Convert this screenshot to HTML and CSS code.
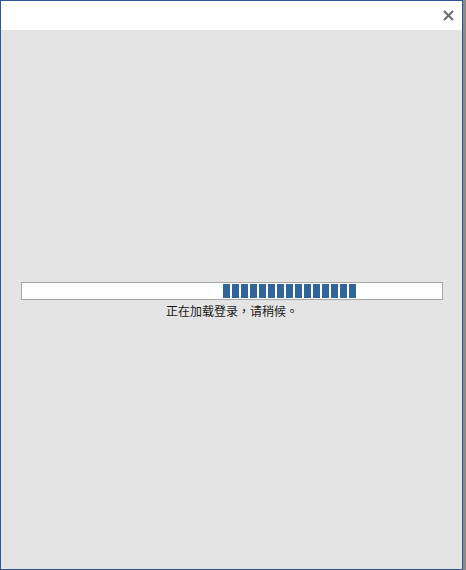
FILE: index.html
```html
<!DOCTYPE html>
<html lang="zh-CN">
<head>
<meta charset="utf-8">
<title>登录</title>
<link rel="stylesheet" href="styles.css">
</head>
<body>
<div class="frame">
  <div class="window">
    <div class="titlebar">
      <span class="close" aria-label="关闭">
        <svg width="11" height="11" viewBox="0 0 11 11"><path d="M1 1 L10 10 M10 1 L1 10" stroke="#6b6b6b" stroke-width="2" fill="none"/></svg>
      </span>
    </div>
    <div class="content">
      <div class="progress">
        <div class="blocks">
          <span></span><span></span><span></span><span></span><span></span>
          <span></span><span></span><span></span><span></span><span></span>
          <span></span><span></span><span></span><span></span><span></span>
        </div>
      </div>
      <div class="status">正在加载登录<span class="punct" lang="zh-TW">，</span>请稍候<span class="punct" lang="zh-TW">。</span></div>
    </div>
  </div>
</div>
</body>
</html>
```
FILE: styles.css
```css
html, body {
  margin: 0;
  padding: 0;
  width: 466px;
  height: 570px;
  overflow: hidden;
  background: #8a8a8a;
}
.frame {
  display: flex;
  width: 466px;
  height: 570px;
}
.window {
  box-sizing: border-box;
  width: 463px;
  height: 570px;
  border: 1px solid #2b5797;
  background: #e4e4e4;
  display: flex;
  flex-direction: column;
  font-family: "Noto Sans CJK SC", "Noto Sans", sans-serif;
}
.titlebar {
  height: 29px;
  background: #ffffff;
  display: flex;
  justify-content: flex-end;
  align-items: flex-start;
}
.close {
  display: flex;
  margin-top: 9px;
  margin-right: 8px;
}
.content {
  flex: 1;
  display: flex;
  flex-direction: column;
  align-items: center;
  padding-top: 252px;
  padding-left: 20px;
  padding-right: 19px;
}
.progress {
  box-sizing: border-box;
  width: 422px;
  height: 18px;
  border: 1px solid #a6a6a6;
  background: #ffffff;
  padding: 1px 0 1px 201px;
}
.blocks {
  display: flex;
  gap: 2px;
  height: 14px;
}
.blocks span {
  width: 7px;
  height: 14px;
  background: #2f6598;
}
.status {
  margin-top: 2px;
  font-size: 12px;
  line-height: 17px;
  color: #1a1a1a;
}
.punct {
  font-family: "Noto Sans CJK TC", sans-serif;
}
```
